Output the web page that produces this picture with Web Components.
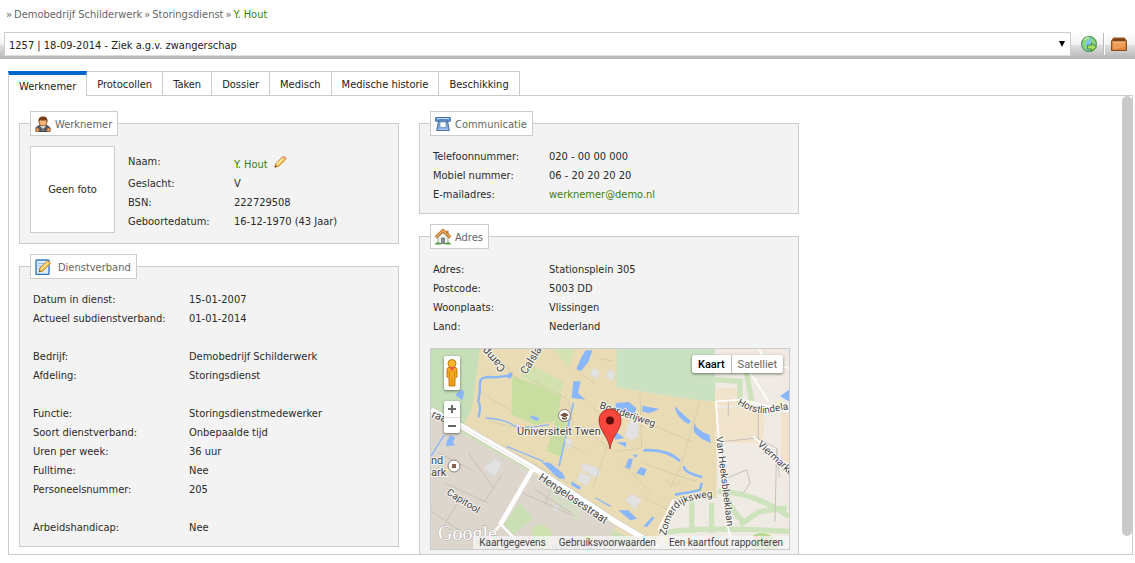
<!DOCTYPE html>
<html lang="nl">
<head>
<meta charset="utf-8">
<title>Werknemer - Y. Hout</title>
<style>
html, body { margin: 0; height: 100%; }
body { font: 11px/19px "DejaVu Sans Condensed", "DejaVu Sans", Tahoma, sans-serif; color: #2a2a2a; background: #fff; --line: #ccc; --link: #3c7f00; }
</style>
</head>
<body>
<employee-app></employee-app>
<script>
function define(name, html, setup) {
  const tpl = document.createElement('template');
  tpl.innerHTML = html;
  customElements.define(name, class extends HTMLElement {
    constructor() {
      super();
      this.attachShadow({ mode: 'open' }).append(tpl.content.cloneNode(true));
    }
    connectedCallback() { if (setup) setup(this, this.shadowRoot); }
  });
}

const ICONS = {
  person: `<path d="M1 15.500v-3c0-1.500 1.500-2.500 4-3h6c2.500.5 4 1.500 4 3v3z" fill="#555c63" stroke="#3a3f44"/><path d="M1 12.500q1.500-1 3 .5v2.500H1zM12 13q1.500-1.500 3-.5v3h-3z" fill="#f0a060" stroke="#b5652a" stroke-width=".7"/><path d="M5 10l3 3 3-3-1-1H6z" fill="#dfe6ea"/><circle cx="8" cy="6" r="4" fill="#f3b57c" stroke="#8a4a1c" stroke-width=".8"/><path d="M3.500 6.500C3 2 5 .5 8 .5s5 1.500 4.500 6l-1-2.500q-3.500 1-7 0z" fill="#7a3f14"/><path d="M7.500 12h1v3.500h-1z" fill="#8b9299"/>`,
  note: `<rect x="1" y="1" width="13" height="14.500" rx="1" fill="#dcecfb" stroke="#3579c4" stroke-width="1.400"/><path d="M3 4.500h8M3 7h6M3 9.500h4" stroke="#8db9e4"/><path d="M4 13l1-4L12.500 1.500l3 2.800L8 12z" fill="#fcc24c" stroke="#b8751a" stroke-width=".8"/><path d="M6 10.500l7.500-7.500" stroke="#ffe9a8" stroke-width="1.200"/><path d="M4 13l.5-2 1.500 1.500z" fill="#444"/>`,
  phone: `<path d="M.8 1.500h14.400l.4 3.500-3 .6-.8-1.500H4.200l-.8 1.500-3-.6z" fill="#6f9fd6" stroke="#33619c" stroke-width=".9"/><path d="M3.500 5h9l1.800 9.500H1.700z" fill="#7eabdf" stroke="#33619c" stroke-width=".9"/><path d="M2.300 2.500h11.400" stroke="#c3dcf6"/><rect x="5" y="6" width="6" height="5.500" rx="1" fill="#fff" stroke="#4e7fb8" stroke-width=".6"/><path d="M3.500 13.300h9" stroke="#bcd7f3"/>`,
  house: `<path d="M3 8v6.500h10V8L8 3.500z" fill="#f1f1ec" stroke="#8d8d86" stroke-width=".8"/><path d="M11.500 1.500h2V6h-2z" fill="#c9762c"/><path d="M.7 8.300L8 1.500l7.300 6.800" fill="none" stroke="#a85f18" stroke-width="3"/><path d="M1 8L8 1.500 15 8" fill="none" stroke="#f2b25f" stroke-width="1.500"/><path d="M6.500 9h3v5.500h-3z" fill="#8f9499" stroke="#5f656a" stroke-width=".7"/><path d="M0 15q1-2.500 4-1.500l2 1v1H0zM16 15q-1-2.500-4-1.500l-2 1v1h6z" fill="#4aa43c"/>`,
  pencil: `<path d="M2 14l1.500-4.500L11 2q1.500-1 3 .500t.3 3L6.500 13z" fill="#fbc55a" stroke="#b9761c" stroke-width=".9"/><path d="M4.500 10.500L12 3.500" stroke="#fff0b8" stroke-width="1.500"/><path d="M10.500 2.500l3.500 3.300.8-1.200q.4-1.500-1.300-2.700t-2.300-.1z" fill="#f2a27c"/><path d="M2 14l.8-2.500 1.700 1.700z" fill="#5a3a1a"/>`,
  globe: `<circle cx="8" cy="8" r="7.400" fill="#7fc6ee" stroke="#4f9d3d" stroke-width="1.200"/><path d="M2 5q2-4 6-4l1 2-2 1-1 2-2 1 1 3 1 2-1 2Q.5 11 2 5zM10 2q4 1.500 4.800 5L12 8l-2-2z" fill="#8fd67c"/><path d="M3 4q2-2.500 5-2.500" stroke="#e6f9e0" fill="none"/><path d="M6.500 9.200h4V7l5 4-5 4.300V13h-4z" fill="#a6dd63" stroke="#3f8a20" stroke-width=".9"/>`,
  box: `<path d="M2.500 2h11l2 3v9.500H.5V5z" fill="#a9622a" stroke="#84430f" stroke-width=".9"/><path d="M3 3h10l1.200 2H1.800z" fill="#7c4318"/><rect x="1.500" y="5.700" width="13" height="8" fill="#ee9c58"/><path d="M1.500 6.200h13" stroke="#ffc690"/><path d="M1.500 13.700h13v-3z" fill="#e08539"/>`
};
define('app-icon', `<style>
:host { display: inline-flex; flex: none; width: 16px; height: 16px; }
svg { width: 100%; height: 100%; display: block; }
</style><svg viewBox="0 0 16 16" aria-hidden="true"></svg>`, (host, root) => {
  root.querySelector('svg').innerHTML = ICONS[host.getAttribute('name')];
});

define('crumb-trail', `<style>
:host { display: block; padding: 5px 6px 8px; color: #666; }
nav { display: flex; gap: 2px; }
</style><nav aria-label="Kruimelpad"><slot></slot></nav>`);

define('case-toolbar', `<style>
:host { display: flex; align-items: center; padding: 0 5px 3px 4px; height: 24px; gap: 7px;
  background: linear-gradient(#fff, #f2f2f3 45%, #dfdfe1 50%, #bdbdbe 90%, #b8b8b8); }
.pick { flex: 1; display: flex; position: relative; }
select { flex: 1; appearance: none; box-sizing: border-box; height: 24px; padding: 2px 4px 0; border: 1px solid var(--line);
  border-bottom-color: #ddd; border-radius: 0; background: #fff; font: inherit; color: #222; }
.pick::after { content: ""; position: absolute; right: 6px; top: 9px; border: solid transparent; border-width: 6px 3px 0; border-top-color: #000; }
button { display: flex; padding: 0 3px; border: 0; background: none; }
i { width: 1px; height: 22px; background: #bbb; border-right: 1px solid #fff; }
.tools { display: flex; align-items: center; gap: 3px; }
</style>
<div class="pick"><select aria-label="Dossier"><option>1257 | 18-09-2014 - Ziek a.g.v. zwangerschap</option></select></div>
<div class="tools"><button aria-label="Openen"><app-icon name="globe"></app-icon></button><i></i><button aria-label="Archief"><app-icon name="box"></app-icon></button></div>`);

define('tab-strip', `<style>
:host { display: flex; height: 24px; position: relative; z-index: 1; }
::slotted(button) { height: 25px; margin: 0; padding: 2px 10px 0; border: 1px solid var(--line) !important; border-left: 0 !important;
  background: #fff; font: inherit; color: #222; }
::slotted(button[aria-selected="true"]) { border: solid var(--line) !important; border-width: 4px 1px 0 1px !important; border-top-color: #06c !important; }
</style><slot></slot>`);

define('info-box', `<style>
:host { display: block; }
fieldset { margin: 0; min-width: 0; padding: 10px 8px 9px 10px; border: 1px solid var(--line); background: #f3f3f3; }
legend { display: flex; align-items: center; gap: 4px; box-sizing: border-box; height: 25px; padding: 0 5px 0 4px;
  border: 1px solid var(--line); background: #fff; color: #666; }
slot[name="title"] { display: block; padding-top: 2px; }
</style><fieldset><legend><slot name="icon"></slot><slot name="title"></slot></legend><slot></slot></fieldset>`);

define('detail-list', `<style>
:host { display: block; padding: 1px 3px 0; }
dl { display: grid; grid-template-columns: var(--label, 116px) 1fr; margin: 0; }
::slotted(*) { margin: 0; min-height: 19px; }
::slotted(.group) { margin-top: 19px; }
::slotted(.name) { min-height: 22px; display: flex; align-items: flex-end; gap: 5px; }
</style><dl><slot></slot></dl>`);

define('photo-card', `<style>
:host { display: flex; gap: 10px; padding-bottom: 1px; }
figure { box-sizing: border-box; width: 85px; height: 87px; margin: 0; display: flex; align-items: center; justify-content: center;
  border: 1px solid var(--line); background: #fff; }
.info { flex: 1; padding-top: 5px; }
</style><figure>Geen foto</figure><div class="info"><slot></slot></div>`);

define('location-map', `<style>
:host { display: block; position: relative; height: 200px; margin-top: 12px; border: 1px solid var(--line); overflow: hidden;
  background: #efebe3; font-family: Roboto, sans-serif; font-size: 11px; }
svg { position: absolute; left: 0; top: 0; display: block; }
.lbl text { fill: #444; stroke: #fff; stroke-width: 2px; stroke-opacity: .75; paint-order: stroke; }
.ctl { position: absolute; display: flex; background: #fff; border-radius: 2px; box-shadow: 0 1px 3px rgba(0,0,0,.5); }
button { border: 0; margin: 0; padding: 0; background: none; font: inherit; color: #666; display: flex; align-items: center; justify-content: center; }
.man { left: 13px; top: 7px; width: 16px; height: 34px; }
.man svg { position: static; }
.zoom { left: 13px; top: 52px; width: 16px; flex-direction: column; }
.zoom button { height: 16px; }
.zoom button + button { border-top: 1px solid #ddd; }
.zoom svg { position: static; }
.type { right: 6px; top: 6px; height: 18px; }
.type button { padding: 0 6px; }
.type b { color: #000; font-weight: 500; }
.type button + button { border-left: 1px solid #bbb; }
.terms { position: absolute; right: 0; bottom: 0; display: flex; gap: 13px; padding: 0 6px; height: 13px; line-height: 13px; font-size: 10px; background: rgba(245,245,245,.75); }
.terms a { color: #444; text-decoration: none; }
</style>
<svg width="358" height="200" viewBox="18 18 1074 600" aria-hidden="true">
<rect x="18" y="18" width="1074" height="600" fill="#efebe4"/>
<path d="M165 18H590V130L730 158 875 175V465L745 470 690 618H560L18 215z" fill="#e9dcb5"/>
<path d="M875 195L1000 190 1018 220 1015 300 900 300 870 280zM870 135l70 0v55l-70-5z" fill="#f1e3cc"/>
<path d="M1068 210h24v160l-24-20z" fill="#f3e2cb"/>
<path d="M18 18H165L140 200 110 255 18 200z" fill="#c6dfb9"/>
<path d="M575 18H870V175L825 172 730 158 575 132z" fill="#cbe2c2"/>
<path d="M262 98L410 155 400 210 435 240 410 342 365 325 390 235 330 245 260 215z" fill="#c8dea0"/>
<path d="M310 62L420 118 402 158 285 100z" fill="#d2e1ae"/>
<path d="M385 18H450L430 75z" fill="#d3e2b0"/>
<path d="M110 262L330 380 315 400 100 275z" fill="#cddfb5"/>
<path d="M18 218L330 395 570 548V618H18z" fill="#ddd6cd"/>
<path d="M560 560L690 618H560zM285 480l40 45-60 50-30-30z" fill="#cbdfb4"/>
<path d="M330 545q30-5 55 25l-20 48h-30q-25-40-5-73z" fill="#cde2ae"/>
<path d="M345 400L480 480l-20 60-70-60z" fill="#d6dcc6"/>
<g fill="none" stroke="#cde3bb" stroke-width="16">
<path d="M870 110l75 5 0 75M900 430q10 70 60 110M880 445q100 0 212 75M945 545l60-40 80-10M720 570q80-20 372-5M860 480v90M800 475v95M960 65l20 110"/></g>
<path d="M985 575q60-20 75 43h-75z" fill="#b8d990"/>
<g fill="#8ab7fb">
<path d="M455 75L468 45 482 22h20l-12 35-22 27-12-4zM440 165l5-50 22 0-8 35 22 20z"/>
<path d="M350 357l25 3 38 30 8 17-20 0zM440 415l28 18-5 7-25-14zM90 155l20-16 8 8-6 25zM315 217l28 7-5 10-20-8z"/>
<path d="M572 180l40-3 22 18-5 18-57-10zM652 188l52 10-30 12-22-4zM748 190l50 45-8 8q-35-18-42-53zM808 240q10 25 45 35l5 25q-40-15-52-35zM570 265l28 20-28 5zM575 298l28 0v15zM600 375l10-28 14 0-8 30zM633 390l15-18 17 7-8 20zM622 335h16l-6 10zM580 502l30 0 26 25-20 5zM655 550l28-30 5 5-22 28zM1065 160l27-20v35zM65 295l12-20 14 10-8 12 8 10-28 3z"/></g>
<g fill="none" stroke="#8ab7fb" stroke-linejoin="round">
<path d="M260 97l-50 6q-45-5-45 15 0 35-5 55 10 20 0 50" stroke-width="7"/>
<path d="M445 180L425 270 402 370" stroke-width="5"/><path d="M250 95l10 5" stroke-width="18"/>
<path d="M18 340L58 275M182 225q60 5 80 20t110 0M245 310l110 45M512 465l45 25" stroke-width="4"/>
<path d="M655 322q70-5 110 32M777 370q0 20 55 32M750 455q65-10 75-15l5-20" stroke-width="8"/></g>
<g fill="#e3e2e2" stroke="#d2d1d0" stroke-width="1">
<path d="M175 375l35-28 20 15-20 38zM470 360l50 15 8 15-15 15-42-25zM465 388l35 15-15 25-30-15zM420 285l22 5-5 25-15-5zM600 280q5-45 25-55l15 15v40l-20 12zM600 470l20-18 30 20-20 26zM495 95l10-20 20 12-10 20zM540 100l15-20 15 10-5 25zM385 490l12-5 4 15-12 5z"/></g>
<g fill="none" stroke="#cfc6a6" stroke-width="2">
<path d="M205 30l85 90M170 150l100 60M190 235l170 35 120 60M320 110l110 60 15 80M470 250l75 60-40 120M575 210l80 25M645 155l5 160-80 10M655 235l145 60M825 175l-60 200-30 60M655 360q100 40 160 55M650 460l80 40M590 360l90 90M720 410q30 30 50 0M520 45l45 10M450 80l60 40M250 320l180 100M500 190l60 60"/></g>
<g fill="none" stroke="#c9c1b9" stroke-width="3">
<path d="M40 330l100 50M130 330l80 110M60 420l130 60M110 460l-55 90M230 395l-50 80M18 505l170 113M330 440l110 70M270 440l180 80M390 405l-30 80M900 295l95-10 60 30 8 90M1055 315l-5 220M895 410l70-30 10 40-20 30M910 170v50M1000 200v90"/></g>
<path d="M18 202L110 250 325 375 570 535 700 612" fill="none" stroke="#c9c4bd" stroke-width="20"/>
<path d="M18 202L110 250 325 375 570 535 700 612" fill="none" stroke="#fff" stroke-width="17"/>
<path d="M110 252L325 378" fill="none" stroke="#d8d3ca" stroke-width="2"/>
<path d="M322 380L226 545" fill="none" stroke="#fff" stroke-width="14"/><path d="M228 545L300 618M226 545L200 575" fill="none" stroke="#fff" stroke-width="7"/>
<path d="M872 175L890 390Q900 560 930 618M875 175L950 170 1092 205M960 65l70 110M1092 75q-70-10-90-57M985 280l107 100M745 470L700 560" fill="none" stroke="#fff" stroke-width="5"/>
</svg>
<svg class="lbl" width="358" height="200">
<defs><path id="zd" d="M235 187Q240 160 254 154T290 148"/><path id="hl" d="M306 55Q324 66 336 64T370 58"/></defs>
<text transform="translate(75 19) rotate(228)">Camp</text><text transform="translate(95 26) rotate(-58)">Calsla</text>
<text transform="translate(0 68) rotate(22)">raat</text>
<text x="86" y="86">Universiteit Twen</text>
<text transform="translate(168 59) rotate(19)" font-size="10">Boerderijweg</text>
<text x="0" y="115">nd</text><text x="0" y="127">ark</text>
<text transform="translate(15 145) rotate(32)" font-size="10">Capitool</text>
<text transform="translate(107 130) rotate(34)">Hengelosestraat</text>
<text font-size="10"><textPath href="#hl">Horstlindela</textPath></text>
<text transform="translate(326 96) rotate(43)" font-size="10">Viermarke</text>
<text transform="translate(285 88) rotate(83)" font-size="10">Van Heeksbleeklaan</text>
<text font-size="10"><textPath href="#zd">Zomerdijksweg</textPath></text>
<text x="120" y="203" font-size="10" fill-opacity=".5">Westerbegraafplaats</text>
<circle cx="133.500" cy="66.500" r="6" fill="#fff" stroke="#8c7d70"/><path d="M129 66l4.500-2.500L138 66l-4.500 2.500zM131 68v2q2.500 1.500 5 0v-2l-2.500 1.300z" fill="#75563f"/>
<circle cx="23" cy="117" r="6" fill="#fff" stroke="#8c7d70"/><path d="M21 115h4v4h-4z" fill="#875f44"/>
<text x="7" y="191" style="font:20px 'Liberation Serif',serif;fill:#fff;stroke:#999;stroke-width:1px">Google</text>
<path d="M179 100C178 88 168 82 168 71a11 11 0 0 1 22 0C190 82 180 88 179 100z" fill="#f9463d" stroke="#9c2620" stroke-width=".8"/><circle cx="179" cy="71.500" r="4" fill="#5c0d0b"/>
</svg>
<div class="ctl man"><button aria-label="Street View"><svg width="16" height="34" viewBox="0 0 16 34"><path d="M3 14q0-3 3-3h4q3 0 3 3v7l-2 1v8H5v-8l-2-1z" fill="#f5a81c" stroke="#b87408" stroke-width=".9"/><circle cx="8" cy="7.500" r="4" fill="#f9b52a" stroke="#b87408" stroke-width=".9"/><path d="M5 11h6l-3 4z" fill="#ed5b48"/><path d="M8 21v9M5.500 15v6M10.500 15v6" stroke="#c98208" stroke-width=".8"/></svg></button></div>
<div class="ctl zoom"><button aria-label="Inzoomen"><svg width="10" height="10"><path d="M1 4h8v2H1zM4 1h2v8H4z" fill="#666"/></svg></button><button aria-label="Uitzoomen"><svg width="10" height="10"><path d="M1 4h8v2H1z" fill="#666"/></svg></button></div>
<div class="ctl type"><button><b>Kaart</b></button><button>Satelliet</button></div>
<div class="terms"><a href="#">Kaartgegevens</a><a href="#">Gebruiksvoorwaarden</a><a href="#">Een kaartfout rapporteren</a></div>`);

define('scroll-panel', `<style>
:host { flex: 1; min-height: 0; display: flex; border: 1px solid var(--line); overflow: hidden; background: #fff; }
.body { flex: 1; min-width: 0; padding: 15px 10px 0; overflow: hidden; }
.thumb { width: 10px; height: 96%; border-radius: 5px; background: #c9c9c9; }
</style><div class="body"><slot></slot></div><div class="thumb"></div>`);

define('employee-app', `<style>
:host { display: flex; flex-direction: column; height: 100vh; }
main { flex: 1; min-height: 0; display: flex; flex-direction: column; padding: 12px 2px 8px 8px; }
.cols { display: grid; grid-template-columns: repeat(2, minmax(0, 380px)); gap: 20px; align-items: start; }
.col { display: grid; gap: 10px; }
.who { --label: 106px; } .job { --label: 156px; }
a { color: var(--link); text-decoration: none; }
crumb-trail a:not([aria-current]) { color: #666; }
.edit { display: flex; align-self: flex-end; height: 19px; padding: 0; border: 0; background: none; }
.edit app-icon { width: 14px; height: 14px; }
app-icon[name="note"] { margin-right: 3px; }
</style>
<crumb-trail><span>»</span><a href="#">Demobedrijf Schilderwerk</a><span>»</span><a href="#">Storingsdienst</a><span>»</span><a href="#" aria-current="page">Y. Hout</a></crumb-trail>
<case-toolbar></case-toolbar>
<main>
<tab-strip role="tablist"><button role="tab" aria-selected="true">Werknemer</button><button role="tab">Protocollen</button><button role="tab">Taken</button><button role="tab">Dossier</button><button role="tab">Medisch</button><button role="tab">Medische historie</button><button role="tab">Beschikking</button></tab-strip>
<scroll-panel><div class="cols">
<div class="col">
<info-box><app-icon slot="icon" name="person"></app-icon><span slot="title">Werknemer</span>
<photo-card><detail-list class="who">
<dt>Naam:</dt><dd class="name"><a href="#">Y. Hout</a><button class="edit" aria-label="Bewerken"><app-icon name="pencil"></app-icon></button></dd>
<dt>Geslacht:</dt><dd>V</dd><dt>BSN:</dt><dd>222729508</dd><dt>Geboortedatum:</dt><dd>16-12-1970 (43 Jaar)</dd>
</detail-list></photo-card></info-box>
<info-box><app-icon slot="icon" name="note"></app-icon><span slot="title">Dienstverband</span>
<detail-list class="job">
<dt>Datum in dienst:</dt><dd>15-01-2007</dd><dt>Actueel subdienstverband:</dt><dd>01-01-2014</dd>
<dt class="group">Bedrijf:</dt><dd class="group">Demobedrijf Schilderwerk</dd><dt>Afdeling:</dt><dd>Storingsdienst</dd>
<dt class="group">Functie:</dt><dd class="group">Storingsdienstmedewerker</dd><dt>Soort dienstverband:</dt><dd>Onbepaalde tijd</dd>
<dt>Uren per week:</dt><dd>36 uur</dd><dt>Fulltime:</dt><dd>Nee</dd><dt>Personeelsnummer:</dt><dd>205</dd>
<dt class="group">Arbeidshandicap:</dt><dd class="group">Nee</dd>
</detail-list></info-box>
</div>
<div class="col">
<info-box><app-icon slot="icon" name="phone"></app-icon><span slot="title">Communicatie</span>
<detail-list><dt>Telefoonnummer:</dt><dd>020 - 00 00 000</dd><dt>Mobiel nummer:</dt><dd>06 - 20 20 20 20</dd><dt>E-mailadres:</dt><dd><a href="mailto:werknemer@demo.nl">werknemer@demo.nl</a></dd></detail-list></info-box>
<info-box><app-icon slot="icon" name="house"></app-icon><span slot="title">Adres</span>
<detail-list><dt>Adres:</dt><dd>Stationsplein 305</dd><dt>Postcode:</dt><dd>5003 DD</dd><dt>Woonplaats:</dt><dd>Vlissingen</dd><dt>Land:</dt><dd>Nederland</dd></detail-list>
<location-map></location-map></info-box>
</div>
</div></scroll-panel>
</main>`);
</script>
</body>
</html>
